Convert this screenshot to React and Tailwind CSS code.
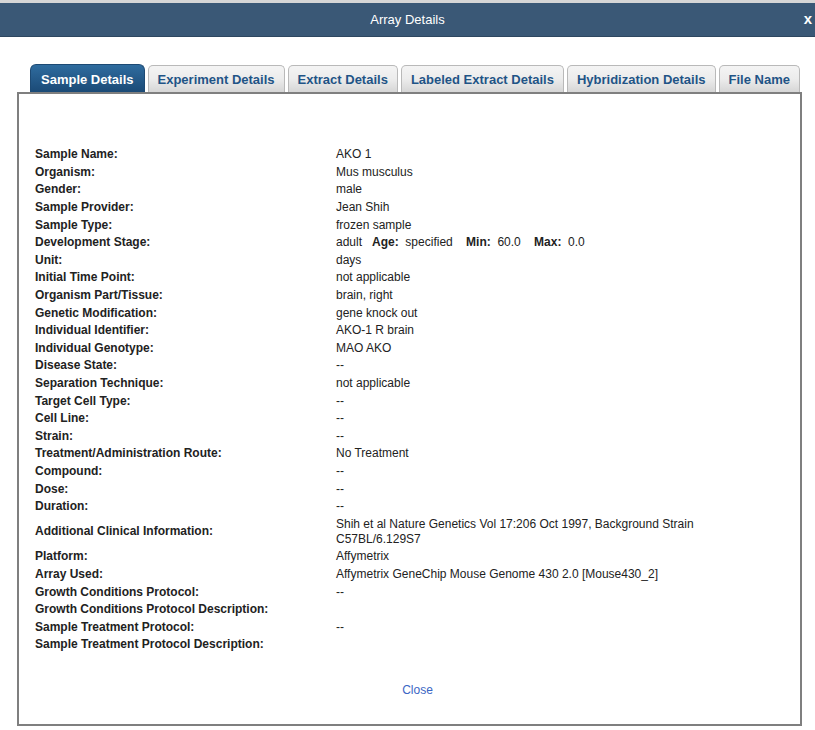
import React from 'react';

const tabs = [
  'Sample Details',
  'Experiment Details',
  'Extract Details',
  'Labeled Extract Details',
  'Hybridization Details',
  'File Name',
];

const rows = [
  ['Sample Name:', 'AKO 1'],
  ['Organism:', 'Mus musculus'],
  ['Gender:', 'male'],
  ['Sample Provider:', 'Jean Shih'],
  ['Sample Type:', 'frozen sample'],
  ['Development Stage:', 'stage'],
  ['Unit:', 'days'],
  ['Initial Time Point:', 'not applicable'],
  ['Organism Part/Tissue:', 'brain, right'],
  ['Genetic Modification:', 'gene knock out'],
  ['Individual Identifier:', 'AKO-1 R brain'],
  ['Individual Genotype:', 'MAO AKO'],
  ['Disease State:', '--'],
  ['Separation Technique:', 'not applicable'],
  ['Target Cell Type:', '--'],
  ['Cell Line:', '--'],
  ['Strain:', '--'],
  ['Treatment/Administration Route:', 'No Treatment'],
  ['Compound:', '--'],
  ['Dose:', '--'],
  ['Duration:', '--'],
  ['Additional Clinical Information:', 'Shih et al Nature Genetics Vol 17:206 Oct 1997, Background Strain C57BL/6.129S7'],
  ['Platform:', 'Affymetrix'],
  ['Array Used:', 'Affymetrix GeneChip Mouse Genome 430 2.0 [Mouse430_2]'],
  ['Growth Conditions Protocol:', '--'],
  ['Growth Conditions Protocol Description:', ''],
  ['Sample Treatment Protocol:', '--'],
  ['Sample Treatment Protocol Description:', ''],
];

const App = () => {
  return (
    <div className="w-[815px] h-[730px] bg-white font-['Liberation_Sans',Arial,sans-serif] text-[#222] overflow-hidden">
      {/* Title bar */}
      <div className="h-[3px] bg-[#d6d6d6]" />
      <div className="relative h-[34px] bg-[#3a5876] border-b border-[#2e4760] flex items-center justify-center">
        <span className="text-white text-[13px]">Array Details</span>
        <span className="absolute right-[3px] top-[8px] text-white font-bold text-[15px] leading-none">x</span>
      </div>

      <div className="px-[17px] pt-[27px]">
        {/* Tabs */}
        <div className="flex gap-[3px] pl-[13px] h-[28px] items-end">
          {tabs.map((t, i) =>
            i === 0 ? (
              <div
                key={t}
                className="shrink-0 whitespace-nowrap h-[28px] px-[10px] pt-[3px] flex items-center rounded-t-[6px] bg-gradient-to-b from-[#2f6c9f] to-[#1b4a76] border border-[#1d4a74] border-b-0 text-white font-bold text-[13px]"
              >
                {t}
              </div>
            ) : (
              <div
                key={t}
                className="shrink-0 whitespace-nowrap h-[27px] px-[9px] pt-[2px] flex items-center rounded-t-[5px] bg-gradient-to-b from-[#f4f4f4] via-[#ececec] to-[#d6d6d6] border border-[#b9b9b9] border-b-0 text-[#1f5486] font-bold text-[13px]"
              >
                {t}
              </div>
            )
          )}
        </div>

        {/* Content box */}
        <div className="w-[785px] h-[634px] border-2 border-[#7f7f7f] pl-[16px] pt-[52px] flex flex-col">
          <div className="flex flex-col">
            {rows.map(([label, value]) => (
              <div key={label} className="flex text-[12px] leading-[15px] py-[1.3px]">
                <div className="w-[301px] shrink-0 font-bold self-center">{label}</div>
                <div className="w-[375px]">
                  {value === 'stage' ? (
                    <span>
                      adult&nbsp;&nbsp;&nbsp;<b>Age:</b>&nbsp;&nbsp;specified&nbsp;&nbsp;&nbsp;&nbsp;<b>Min:</b>&nbsp;&nbsp;60.0&nbsp;&nbsp;&nbsp;&nbsp;<b>Max:</b>&nbsp;&nbsp;0.0
                    </span>
                  ) : (
                    value
                  )}
                </div>
              </div>
            ))}
          </div>
          <div className="mt-[23px] text-center">
            <a className="text-[12px] text-[#3a66c4] cursor-pointer">Close</a>
          </div>
        </div>
      </div>
    </div>
  );
};

export default App;
